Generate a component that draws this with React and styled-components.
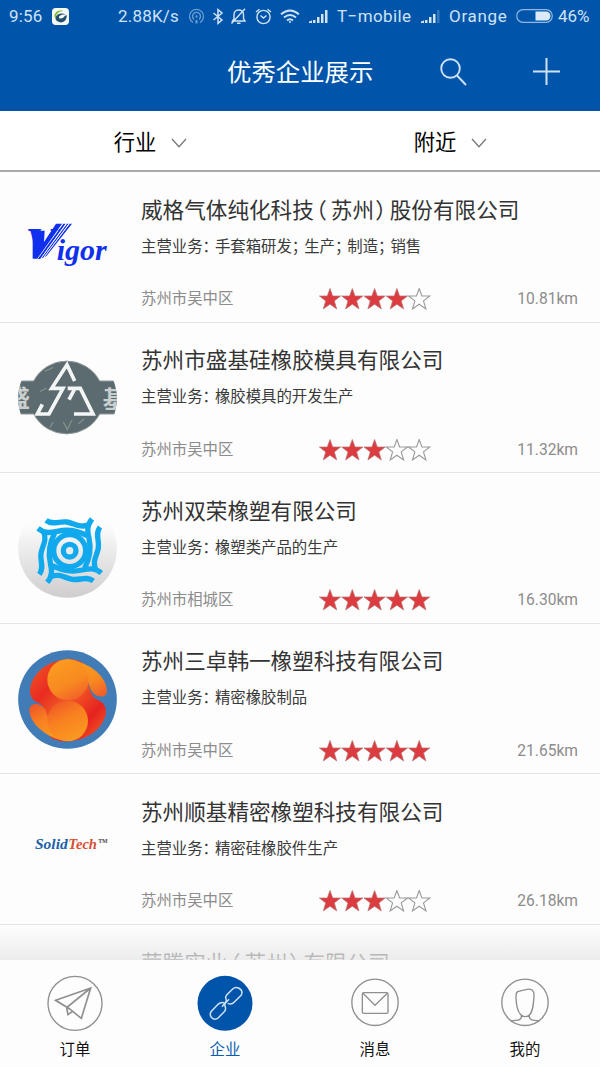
import React from 'react';
import styled, { createGlobalStyle } from 'styled-components';

const GlobalStyle = createGlobalStyle`
  * { box-sizing: border-box; }
  body { margin: 0; background: #fdfdfd; }
  svg { display: block; }
`;

const Screen = styled.div`
  width: 600px;
  height: 1067px;
  overflow: hidden;
  display: flex;
  flex-direction: column;
  background: #fdfdfd;
  font-family: Roboto, 'Noto Sans CJK SC', sans-serif;
  color: #333;
`;

const Header = styled.header`
  flex: none;
  height: 111px;
  background: #0055aa;
  color: #fff;
`;

const StatusBar = styled.div`
  height: 32px;
  display: flex;
  align-items: center;
  color: #cfe2f6;
`;

const StatusItem = styled.div`
  flex: none;
  width: ${(p) => p.$w}px;
  margin-left: ${(p) => p.$gap || 0}px;
  font-size: 17px;
  line-height: 32px;
  letter-spacing: ${(p) => p.$track || 0}px;
  white-space: nowrap;
`;

const TitleBar = styled.div`
  display: grid;
  grid-template-columns: 227px 213px 93px 1fr;
  align-items: center;
  height: 79px;
`;

const PageTitle = styled.h1`
  grid-column: 2;
  margin: 0;
  padding-top: 2px;
  font-size: 24.4px;
  font-weight: 400;
  line-height: 36px;
  white-space: nowrap;
`;

const Filters = styled.div`
  flex: none;
  display: grid;
  grid-template-columns: 1fr 1fr;
  height: 61px;
  background: #fff;
  border-bottom: 2px solid #a9a9a9;
`;

const Filter = styled.div`
  display: flex;
  align-items: center;
  justify-content: center;
  gap: 15px;
  padding: 4px 0 0 1px;
  font-size: 21.3px;
  line-height: 32px;
  color: #000;
`;

const List = styled.main`
  flex: 1;
  min-height: 0;
  overflow: hidden;
  position: relative;
`;

const Row = styled.article`
  display: grid;
  grid-template-columns: 99px 1fr;
  column-gap: 24px;
  height: 150.6px;
  padding: 0 22px 0 18px;
  border-bottom: 1px solid #e4e4e4;
`;

const Avatar = styled.svg`
  width: 99px;
  height: 99px;
  margin-top: 26px;
`;

const Info = styled.div`
  padding-top: 23.6px;
`;

const Company = styled.h2`
  margin: 0;
  font-size: 21.6px;
  font-weight: 400;
  line-height: 30px;
  white-space: nowrap;
  color: #333;
`;

const Business = styled.p`
  margin: 9px 0 28.4px;
  font-size: 15.4px;
  line-height: 24px;
  white-space: nowrap;
  color: #3a3a3a;
`;

const Punct = styled.span`
  font-feature-settings: 'halt' 1;
  margin-left: ${(p) => p.$before || 0}em;
  margin-right: ${(p) => p.$after || 0}em;
`;

const Meta = styled.div`
  display: grid;
  grid-template-columns: 177.500px 1fr auto;
  align-items: center;
  font-size: 15.4px;
  line-height: 24px;
  color: #8c8c8c;
`;

const Distance = styled.span`
  font-size: 15.6px;
`;

const Stars = styled.svg`
  width: 112px;
  height: 22px;
`;

const ListFade = styled.div`
  position: absolute;
  left: 0;
  right: 0;
  bottom: 0;
  height: 34px;
  background: linear-gradient(rgba(253, 253, 253, 0.3), rgba(232, 232, 232, 0.8));
`;

const TabBar = styled.nav`
  flex: none;
  height: 107px;
  display: grid;
  grid-template-columns: repeat(4, 1fr);
  background: #fdfdfd;
`;

const Tab = styled.div`
  display: flex;
  flex-direction: column;
  align-items: center;
  padding-top: 15px;
  font-size: 15.4px;
  line-height: 24px;
  color: ${(p) => (p.$active ? '#0b5cae' : '#111')};
`;

const TabIcon = styled.svg`
  width: 56px;
  height: 56px;
  margin-bottom: 7px;
  fill: none;
  stroke: #8f8f8f;
  stroke-width: 4;
`;

const SERIF = "'Liberation Serif', serif";

const VigorLogo = () => (
  <Avatar viewBox="54 52 297 297">
    <g fill="#1030ee" fontFamily={SERIF} fontWeight="700" fontStyle="italic">
      <text transform="translate(76 233) scale(1.1 1)" fontSize="130">V</text>
      <text x="170" y="238" fontSize="88" textLength="150" lengthAdjust="spacingAndGlyphs">igor</text>
    </g>
    <g fill="#1030ee">
      <path d="M98 150H134L132 184 168 129H187L112 234H98Z" />
      <path d="M114 234 190 129H197L121 234ZM124 232 201 129H206L130 231ZM133 229 209 129H216L140 225Z" />
    </g>
    <g stroke="#fdfdfd" strokeWidth="2.500">
      <path d="M113 234 188 129M122.500 234 199 129M131.500 230 208 129" />
    </g>
  </Avatar>
);

const SealLogo = () => (
  <Avatar viewBox="54 43 297 297">
    <defs>
      <clipPath id="sealClip"><circle cx="202.500" cy="191" r="148" /></clipPath>
    </defs>
    <g clipPath="url(#sealClip)">
      <path d="M54 139H101A112 112 0 0 1 299 139H351V238H299A112 112 0 0 1 101 238H54Z" fill="#5b6b70" stroke="#8f999b" strokeWidth="3" />
      <g fill="#c9cfcf" fontFamily="'Noto Sans CJK SC', sans-serif" fontSize="72" fontWeight="700">
        <text x="18" y="216">盛</text>
        <text x="308" y="220">基</text>
      </g>
      <path d="M150 278 160 262M190 262 202 285 216 256M134 110 160 98M235 268 252 252M120 170 140 160" fill="none" stroke="#7f9088" strokeWidth="4" />
      <path d="M224 139 201 90 155 161H189L147 238H112L127 209M203 161H241L279 238H222M224 163 207 195" fill="none" stroke="#f4f6f6" strokeWidth="11" />
    </g>
  </Avatar>
);

const WaveLogo = () => (
  <Avatar viewBox="0 0 297 297">
    <defs>
      <linearGradient id="waveBg" x2="0" y2="1">
        <stop offset="0.25" stopColor="#fdfdfd" />
        <stop offset="1" stopColor="#cfcdce" />
      </linearGradient>
    </defs>
    <circle cx="148.500" cy="148.500" r="148" fill="url(#waveBg)" />
    <g fill="none" stroke="#10a9ee" strokeWidth="16">
      <circle cx="155" cy="155" r="19" />
      <circle cx="155" cy="155" r="48" />
      {[0, 90, 180, 270].map((a) => (
        <g key={a} transform={`rotate(${a} 155 155)`}>
          <path d="M60 88C80 104 96 102 118 97S175 93 207 110" />
          <path d="M84 64C105 80 124 65 147 69S185 88 212 77" />
        </g>
      ))}
    </g>
  </Avatar>
);

const SphereLogo = () => (
  <Avatar viewBox="54 28 297 297">
    <defs>
      <linearGradient id="sTop" x1="0.200" y1="0" x2="0.700" y2="1">
        <stop offset="0" stopColor="#fb9d20" /><stop offset="0.600" stopColor="#f88a20" /><stop offset="1" stopColor="#f2602a" />
      </linearGradient>
      <linearGradient id="sBottom" x1="0.800" y1="1" x2="0.300" y2="0">
        <stop offset="0" stopColor="#fb9d20" /><stop offset="0.600" stopColor="#f88020" /><stop offset="1" stopColor="#f05a28" />
      </linearGradient>
      <linearGradient id="sRed" x1="0" y1="0" x2="1" y2="1">
        <stop offset="0" stopColor="#f05a23" /><stop offset="0.300" stopColor="#e92c22" />
        <stop offset="0.500" stopColor="#f15a24" /><stop offset="0.750" stopColor="#e62220" />
        <stop offset="1" stopColor="#f26b21" />
      </linearGradient>
    </defs>
    <circle cx="202.500" cy="176.500" r="148" fill="#427cb7" />
    <path d="M205 55C130 60 90 110 90 153C92 177 105 182 118 188C132 196 140 215 142 245L152 292Q178 304 205 302C280 297 318 247 318 211C316 188 303 183 290 176C276 168 268 150 264 120L250 67Q228 55 205 55Z" fill="url(#sRed)" />
    <path d="M225 60C285 75 321 115 321 153C318 174 288 172 275 151C264 129 262 97 225 60Z" fill="url(#sTop)" />
    <path d="M183 298C125 283 87 239 88 207C91 183 123 186 136 207C147 232 146 263 183 298Z" fill="url(#sBottom)" />
    <circle cx="204" cy="117" r="62" fill="url(#sTop)" />
    <circle cx="203" cy="241" r="61" fill="url(#sBottom)" />
  </Avatar>
);

const SolidTechLogo = () => (
  <Avatar viewBox="54 31 297 297">
    <g fontFamily={SERIF} fontWeight="700" fontStyle="italic" fontSize="45">
      <text x="105" y="179" fill="#205fa9" textLength="98" lengthAdjust="spacingAndGlyphs">Solid</text>
      <text x="205" y="179" fill="#d64f31" textLength="86" lengthAdjust="spacingAndGlyphs">Tech</text>
    </g>
    <text x="294" y="170" fill="#555" fontFamily={SERIF} fontSize="31" fontWeight="700" textLength="29" lengthAdjust="spacingAndGlyphs">™</text>
  </Avatar>
);

const STAR = 'M11 .5 13.700 8H21.600L15.300 12.900 17.700 20.900 11 16.200 4.300 20.900 6.700 12.900 .4 8H8.300Z';

const Rating = ({ value }) => (
  <Stars viewBox="0 0 112 22">
    {[0, 1, 2, 3, 4].map((i) => (
      <path
        key={i}
        d={STAR}
        transform={`translate(${i * 22.3} 0)`}
        fill={i < value ? '#dc3c40' : '#fdfdfd'}
        stroke={i < value ? '#b87070' : '#999'}
        strokeWidth={i < value ? 0.7 : 1.1}
      />
    ))}
  </Stars>
);

// Full-width punctuation is set tighter than a full em.
const SPACING = {
  '（': { $before: 0.11, $after: 0.18 },
  '）': { $before: 0.06, $after: 0.17 },
  '：': { $after: 0.3 },
  '；': { $after: 0.3 },
};

const Typeset = ({ text }) =>
  text.split(/([（）：；])/).map((part, i) =>
    SPACING[part] ? <Punct key={i} {...SPACING[part]}>{part}</Punct> : part
  );

const companies = [
  { name: '威格气体纯化科技（苏州）股份有限公司', business: '手套箱研发；生产；制造；销售', area: '苏州市吴中区', stars: 4, distance: '10.81km', Logo: VigorLogo },
  { name: '苏州市盛基硅橡胶模具有限公司', business: '橡胶模具的开发生产', area: '苏州市吴中区', stars: 3, distance: '11.32km', Logo: SealLogo },
  { name: '苏州双荣橡塑有限公司', business: '橡塑类产品的生产', area: '苏州市相城区', stars: 5, distance: '16.30km', Logo: WaveLogo },
  { name: '苏州三卓韩一橡塑科技有限公司', business: '精密橡胶制品', area: '苏州市吴中区', stars: 5, distance: '21.65km', Logo: SphereLogo },
  { name: '苏州顺基精密橡塑科技有限公司', business: '精密硅橡胶件生产', area: '苏州市吴中区', stars: 3, distance: '26.18km', Logo: SolidTechLogo },
];

const Chevron = () => (
  <svg width="16" height="10" viewBox="0 0 16 10" fill="none" stroke="#777" strokeWidth="1.300">
    <path d="M1 1 8 8.800 15 1" />
  </svg>
);

const Signal = ({ faded }) => (
  <svg width="20" height="14" viewBox="0 0 20 14" fill="currentColor">
    <path d="M0 14V12.500L3 11.500V14ZM4 11H6.500V14H4ZM8 8H10.500V14H8ZM12 5H14.500V14H12Z" />
    <path d="M16 1H18.500V14H16Z" opacity={faded ? 0.25 : 1} />
  </svg>
);

const Status = () => (
  <StatusBar>
    <StatusItem $gap={9} $w={35} $track={0.2}>9:56</StatusItem>
    <StatusItem $gap={8} $w={17}>
      <svg width="17" height="17" viewBox="0 0 51 51">
        <rect width="51" height="51" rx="11" fill="#f5faf5" />
        <path d="M7 26C7 11 22 5 34 9C20 10 12 17 12 29Z" fill="#86b82c" />
        <path d="M10 31C14 16 31 14 42 20C30 18 20 23 21 29C25 34 35 31 38 24L44 21C46 36 34 45 23 43C15 41 11 37 10 31Z" fill="#24506e" />
      </svg>
    </StatusItem>
    <StatusItem $gap={49} $w={62} $track={0.2}>2.88K/s</StatusItem>
    <StatusItem $gap={8} $w={17}>
      <svg width="17" height="17" viewBox="0 0 17 17" fill="none" stroke="#6f9fd2" strokeWidth="1.300">
        <path d="M5 14.500A7 7 0 1 1 12 14.500M6 11.500A4 4 0 1 1 11 11.500" />
        <circle cx="8.500" cy="8.500" r=".5" />
        <path d="M8.500 12V15.500" strokeWidth="2" />
      </svg>
    </StatusItem>
    <StatusItem $gap={7} $w={12}>
      <svg width="12" height="17" viewBox="0 0 12 17" fill="none" stroke="currentColor" strokeWidth="1.500">
        <path d="M1.500 5 10 12 6 15.300V1.700L10 5 1.500 12" />
      </svg>
    </StatusItem>
    <StatusItem $gap={6} $w={17}>
      <svg width="17" height="17" viewBox="0 0 17 17" fill="none" stroke="currentColor" strokeWidth="1.400">
        <path d="M2.500 13H15L13.500 10.500V6.500C13.500 3 11.500 2 8.500 2S4 4 4 7V10.500ZM1.500 15.500 15 .8M7 15.300H10.500" />
      </svg>
    </StatusItem>
    <StatusItem $gap={8} $w={17}>
      <svg width="17" height="17" viewBox="0 0 17 17" fill="none" stroke="currentColor" strokeWidth="1.400">
        <circle cx="8.500" cy="9" r="6.600" />
        <path d="M5.500 7.500 8.500 10 11.500 7.500M1 4 4.500 1.200M12.500 1.200 16 4" />
      </svg>
    </StatusItem>
    <StatusItem $gap={8} $w={20}>
      <svg width="20" height="15" viewBox="0 0 20 15" fill="none" stroke="currentColor" strokeWidth="1.900">
        <path d="M1 5.200Q10 -2.400 19 5.200M4 8.500Q10 3.300 16 8.500M7 11.500Q10 9 13 11.500" />
        <circle cx="10" cy="13" r="1" fill="currentColor" stroke="none" />
      </svg>
    </StatusItem>
    <StatusItem $gap={9} $w={20}><Signal /></StatusItem>
    <StatusItem $gap={8} $w={75} $track={0.4}>T−mobile</StatusItem>
    <StatusItem $gap={9} $w={20}><Signal faded /></StatusItem>
    <StatusItem $gap={8} $w={60} $track={0.7}>Orange</StatusItem>
    <StatusItem $gap={7} $w={37}>
      <svg width="37" height="14" viewBox="0 0 37 14" fill="none" stroke="#8fb9e3">
        <rect x=".7" y=".7" width="35.600" height="12.600" rx="6.300" strokeWidth="1.200" />
        <path d="M19.500 2.500H30A4.500 4.500 0 0 1 30 11.500H19.500Z" fill="#dbe9f8" stroke="none" />
      </svg>
    </StatusItem>
    <StatusItem $gap={5} $w={35}>46%</StatusItem>
  </StatusBar>
);

export default function App() {
  return (
    <Screen>
      <GlobalStyle />
      <Header>
        <Status />
        <TitleBar>
          <PageTitle>优秀企业展示</PageTitle>
          <svg width="27" height="28" viewBox="0 0 27 28" fill="none" stroke="#cfe1f5" strokeWidth="1.900">
            <circle cx="10.500" cy="10.500" r="9.300" />
            <path d="M17 17.500 26 27" />
          </svg>
          <svg width="27" height="27" viewBox="0 0 27 27" fill="none" stroke="#cfe1f5" strokeWidth="2">
            <path d="M0 13.500H27M13.500 0V27" />
          </svg>
        </TitleBar>
      </Header>
      <Filters>
        <Filter>行业<Chevron /></Filter>
        <Filter>附近<Chevron /></Filter>
      </Filters>
      <List>
        {companies.map(({ name, business, area, stars, distance, Logo }) => (
          <Row key={name}>
            <Logo />
            <Info>
              <Company><Typeset text={name} /></Company>
              <Business><Typeset text={`主营业务：${business}`} /></Business>
              <Meta>
                <span>{area}</span>
                <Rating value={stars} />
                <Distance>{distance}</Distance>
              </Meta>
            </Info>
          </Row>
        ))}
        <Row>
          <span />
          <Info>
            <Company><Typeset text="荣腾实业（苏州）有限公司" /></Company>
          </Info>
        </Row>
        <ListFade />
      </List>
      <TabBar>
        <Tab>
          <TabIcon viewBox="140 165 168 168">
            <circle cx="224" cy="250" r="81" />
            <path d="M166 241 271 204 243 295 207 266ZM271 204 199 263 203 284 217 274" strokeWidth="5" />
          </TabIcon>
          订单
        </Tab>
        <Tab $active>
          <TabIcon viewBox="590 165 168 168">
            <circle cx="674" cy="250" r="82.500" fill="#0055aa" stroke="none" />
            <g stroke="#cfe1f5" strokeWidth="4.500">
              <path d="M665 260 676 247C684 236 669 237 679 225L697 207C708 196 731 208 723 225L702 246Q694 255 682 250" />
              <path d="M686 238 676 248C667 257 682 261 673 274L654 293C643 304 624 292 632 275L653 253Q662 245 672 249" />
            </g>
          </TabIcon>
          企业
        </Tab>
        <Tab>
          <TabIcon viewBox="140 165 168 168">
            <circle cx="224" cy="247" r="69.500" />
            <rect x="186" y="218" width="77" height="62" rx="4" />
            <path d="M188 220 224 256 261 220" />
          </TabIcon>
          消息
        </Tab>
        <Tab>
          <TabIcon viewBox="590 165 168 168">
            <circle cx="674" cy="247" r="69.500" />
            <path d="M652 215C661 212 670 211 680 208C693 206 702 212 701 226C700 250 698 290 676 290C653 290 648 255 647 235Q646 219 652 215ZM663 286V292Q661 301 645 301L631 303M687 286V292Q690 301 703 301L717 303" />
          </TabIcon>
          我的
        </Tab>
      </TabBar>
    </Screen>
  );
}
